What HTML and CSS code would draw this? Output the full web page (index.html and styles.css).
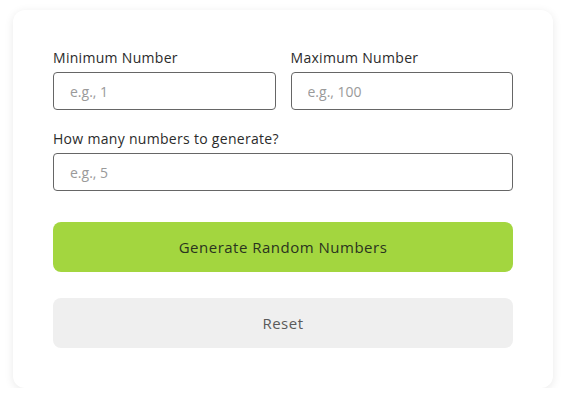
FILE: index.html
```html
<!DOCTYPE html>
<html lang="en">
<head>
<meta charset="utf-8">
<title>Random Number Generator</title>
<link rel="stylesheet" href="styles.css">
</head>
<body>
<main class="card">
  <div class="row">
    <div class="field">
      <label class="label" for="min">Minimum Number</label>
      <input class="input" id="min" type="number" placeholder="e.g., 1">
    </div>
    <div class="field">
      <label class="label" for="max">Maximum Number</label>
      <input class="input" id="max" type="number" placeholder="e.g., 100">
    </div>
  </div>
  <div class="field field-full">
    <label class="label" for="count">How many numbers to generate?</label>
    <input class="input" id="count" type="number" placeholder="e.g., 5">
  </div>
  <button class="btn btn-primary" type="button">Generate Random Numbers</button>
  <button class="btn btn-secondary" type="button">Reset</button>
</main>
</body>
</html>
```

FILE: styles.css
```css
* { box-sizing: border-box; }
html, body { margin: 0; padding: 0; }
body {
  background: #ffffff;
  font-family: "Open Sans", "Liberation Sans", sans-serif;
  color: #333;
  padding: 10px 17px 0 13px;
}
.card {
  width: 540px;
  background: #fff;
  border-radius: 12px;
  box-shadow: 0 2px 10px rgba(0,0,0,0.09);
  padding: 40px 40px 40px;
  display: flex;
  flex-direction: column;
}
.row {
  display: grid;
  grid-template-columns: 1fr 1fr;
  gap: 15px;
}
.field { display: flex; flex-direction: column; }
.field-full { margin-top: 21px; }
.label {
  font-size: 14px;
  font-weight: 500;
  line-height: 15px;
  color: #2b2b2b;
  margin-bottom: 7px;
  letter-spacing: 0.3px;
}
.input {
  height: 38px;
  border: 1px solid #666;
  border-radius: 4px;
  padding: 0 16px;
  font-family: inherit;
  font-size: 14px;
  color: #333;
  outline: none;
  -moz-appearance: textfield;
}
.input::placeholder { color: #9a9a9a; }
.input::-webkit-outer-spin-button,
.input::-webkit-inner-spin-button { -webkit-appearance: none; margin: 0; }
.btn {
  height: 50px;
  border: none;
  border-radius: 8px;
  font-family: inherit;
  font-size: 15px;
  font-weight: 500;
  letter-spacing: 0.5px;
  cursor: pointer;
}
.btn-primary {
  margin-top: 31px;
  background: #a3d63f;
  color: #2a3320;
}
.btn-secondary {
  margin-top: 26px;
  background: #efefef;
  color: #5a5a5a;
}
```
